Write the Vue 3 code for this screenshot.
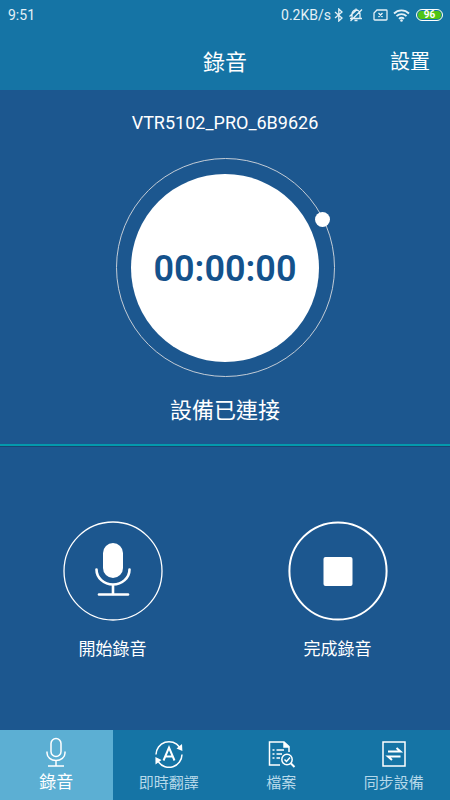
<script setup>
import { ref } from 'vue'

const deviceName = 'VTR5102_PRO_6B9626'
const elapsed = '00:00:00'
const battery = 96
const active = ref('record')

const tabs = [
  { id: 'record', label: '錄音' },
  { id: 'translate', label: '即時翻譯' },
  { id: 'files', label: '檔案' },
  { id: 'sync', label: '同步設備' }
]
</script>

<template>
  <div class="screen">
    <div class="status">
      <span class="clock">9:51</span>
      <div class="indicators">
        <span class="speed">0.2KB/s</span>
        <svg class="bt" width="10" height="14" viewBox="0 0 10 14" aria-hidden="true">
          <path d="M1 4l7 6-3.2 3V1L8 4l-7 6" />
        </svg>
        <svg class="bell" width="16" height="14" viewBox="0 0 16 14" aria-hidden="true">
          <path d="M2 10.500h12M4 10V6a4 4 0 0 1 8 0v4M8 2V.5M6.500 12.500h3M2.500 13L14 1.500M1.500 8.500L9 1.500" />
        </svg>
        <svg class="sim" width="15" height="12" viewBox="0 0 15 12" aria-hidden="true">
          <path d="M4 1h9.200q.8 0 .8.8v8.400q0 .8-.8.8H1.800q-.8 0-.8-.8V4zM5.500 4l4 4M9.500 4l-4 4" />
        </svg>
        <svg class="wifi" width="17" height="13" viewBox="0 0 17 13" aria-hidden="true">
          <path d="M1 4.500a10.500 10.500 0 0 1 15 0M3.500 7.200a7 7 0 0 1 10 0M6 9.800a3.500 3.500 0 0 1 5 0" />
          <circle cx="8.500" cy="11.500" r="1.300" />
        </svg>
        <span class="battery">{{ battery }}</span>
      </div>
    </div>

    <header class="bar">
      <h1>錄音</h1>
      <button type="button" class="settings">設置</button>
    </header>

    <main class="content">
      <section class="monitor">
        <p class="device">{{ deviceName }}</p>
        <div class="dial">
          <div class="disc"><time>{{ elapsed }}</time></div>
          <i class="knob"></i>
        </div>
        <p class="state">設備已連接</p>
      </section>

      <section class="controls">
        <button type="button" class="control">
          <svg width="100" height="100" viewBox="0 0 100 100" aria-hidden="true">
            <circle class="ring thin" cx="50" cy="50" r="49" />
            <rect class="solid" x="40" y="22" width="20" height="35" rx="10" />
            <path class="stand" d="M33.500 48.500a16.500 15 0 0 0 33 0M50 63.500V73" />
            <path class="foot" d="M36 73.500h29" />
          </svg>
          <span>開始錄音</span>
        </button>
        <button type="button" class="control">
          <svg width="100" height="100" viewBox="0 0 100 100" aria-hidden="true">
            <circle class="ring" cx="50" cy="50" r="48.600" />
            <rect class="solid" x="35.500" y="36" width="29" height="29" rx="2" />
          </svg>
          <span>完成錄音</span>
        </button>
      </section>
    </main>

    <nav class="tabs">
      <button
        v-for="tab in tabs"
        :key="tab.id"
        type="button"
        class="tab"
        :class="{ active: tab.id === active }"
        @click="active = tab.id"
      >
        <svg v-if="tab.id === 'record'" width="30" height="32" viewBox="0 0 30 32" aria-hidden="true">
          <rect x="10" y="1.500" width="10" height="18" rx="5" />
          <path d="M6 14.500v1.500a9 7.500 0 0 0 18 0v-1.500M15 23.500v5M7 29h16" />
        </svg>
        <svg v-else-if="tab.id === 'translate'" width="30" height="32" viewBox="0 0 30 32" aria-hidden="true">
          <path d="M2 17.500a13 13 0 0 1 23.500-7.500M28 17.500a13 13 0 0 1-23.500 7.500" />
          <path class="tip" d="M22.500 11.500l5.500-4.500.4 7zM7.500 23l-6 4.500-.1-7.500z" />
          <path class="letter" d="M9.500 23.500l5.500-13 5.500 13M11.500 19.500h7" />
        </svg>
        <svg v-else-if="tab.id === 'files'" width="30" height="32" viewBox="0 0 30 32" aria-hidden="true">
          <path d="M14 28H3.500V5H18l5 4.500V15M18 5v5h5" />
          <path class="tip" d="M18 5l5 5h-5z" />
          <path d="M6.500 13h2M10.500 13H18M6.500 17h2M10.500 17H16M6.500 21h2M10.500 21H14" />
          <circle cx="21" cy="22.500" r="5.200" />
          <path d="M18.500 22.500l2 2 3.500-4" />
          <path class="letter" d="M25 26.500l3.500 3.500" />
        </svg>
        <svg v-else width="30" height="32" viewBox="0 0 30 32" aria-hidden="true">
          <rect x="4" y="5" width="22" height="24" />
          <path class="letter" d="M9 14.500h12.500l-4-3.500M21.500 19.500H9l4 3.500" />
        </svg>
        <span>{{ tab.label }}</span>
      </button>
    </nav>
  </div>
</template>

<style>
body {
  margin: 0;
  background: #1c578f;
}
</style>

<style scoped>
.screen {
  display: flex;
  flex-direction: column;
  min-height: 100vh;
  color: #fff;
  background: #1c578f;
  font-family: Roboto, "Noto Sans CJK TC", sans-serif;
}

button {
  padding: 0;
  border: 0;
  background: none;
  color: inherit;
  font: inherit;
  cursor: pointer;
}

h1,
p {
  margin: 0;
  font-weight: 400;
}

svg {
  display: block;
  fill: none;
  stroke: currentColor;
}

.status {
  display: flex;
  align-items: center;
  justify-content: space-between;
  height: 30px;
  padding: 0 7px 0 8px;
  background: #1574a5;
  color: #e4f0f6;
  font-size: 14px;
}

.indicators {
  display: flex;
  align-items: center;
}

.speed {
  margin-right: 3px;
}

.bell {
  margin: 0 9px 0 4px;
}

.bt,
.bell,
.sim {
  stroke-width: 1.3;
}

.wifi {
  margin: 0 6px 0 5px;
  stroke-width: 1.800;
}

.wifi circle {
  fill: currentColor;
  stroke: none;
}

.battery {
  box-sizing: border-box;
  width: 27px;
  height: 12px;
  border: 1px solid #fff;
  border-radius: 6px;
  box-shadow: inset 0 0 0 1px #1574a5;
  background: #50c514;
  color: #fff;
  font-size: 10px;
  font-weight: 700;
  line-height: 10px;
  text-align: center;
}

.bar {
  display: grid;
  grid-template-columns: 1fr auto 1fr;
  align-items: center;
  height: 60px;
  padding: 0 20px;
  background: #1574a5;
}

.bar h1 {
  grid-column: 2;
  font-size: 22px;
}

.settings {
  justify-self: end;
  font-size: 20px;
}

.content {
  flex: 1;
  display: flex;
  flex-direction: column;
}

.monitor {
  display: flex;
  flex-direction: column;
  align-items: center;
  padding: 22px 0 17px;
  border-bottom: 2px solid #0499ac;
  box-shadow: 0 1px 0 #174470;
}

.device {
  font-size: 18px;
  line-height: 22px;
}

.dial {
  position: relative;
  display: grid;
  box-sizing: border-box;
  width: 219px;
  height: 219px;
  margin: 24px 0 18px;
  border: 1px solid #c3ccd6;
  border-radius: 50%;
  place-items: center;
}

.disc {
  display: grid;
  box-sizing: border-box;
  width: 188px;
  height: 188px;
  padding-top: 2px;
  border-radius: 50%;
  background: #fff;
  color: #14528c;
  place-items: center;
}

.disc time {
  font-size: 36px;
  font-weight: 600;
}

.knob {
  position: absolute;
  top: 53px;
  right: 4px;
  width: 15px;
  height: 15px;
  border-radius: 50%;
  background: #fff;
}

.state {
  font-size: 22px;
  line-height: 32px;
}

.controls {
  flex: 1;
  display: grid;
  grid-template-columns: 1fr 1fr;
  align-items: start;
  padding-top: 75px;
}

.control {
  display: flex;
  flex-direction: column;
  align-items: center;
  gap: 16px;
  font-size: 17px;
  line-height: 24px;
}

.ring {
  stroke-width: 2;
}

.thin {
  stroke-width: 1.300;
}

.solid {
  fill: currentColor;
  stroke: none;
}

.stand,
.foot {
  stroke-width: 2.600;
  stroke-linecap: round;
}

.tabs {
  display: grid;
  grid-template-columns: repeat(4, 1fr);
  height: 70px;
  background: #1574a5;
}

.tab {
  display: flex;
  flex-direction: column;
  align-items: center;
  gap: 4px;
  padding-top: 7px;
  font-size: 15px;
  line-height: 20px;
}

.tab span {
  color: #b5d8e9;
}

.tab svg {
  stroke-width: 1.500;
}

.tab .letter {
  stroke-width: 2;
}

.tab .tip {
  fill: currentColor;
  stroke: none;
}

.tab.active {
  gap: 3px;
  background: #5cafd3;
  font-size: 17px;
}

.tab.active span {
  color: #fff;
}
</style>
